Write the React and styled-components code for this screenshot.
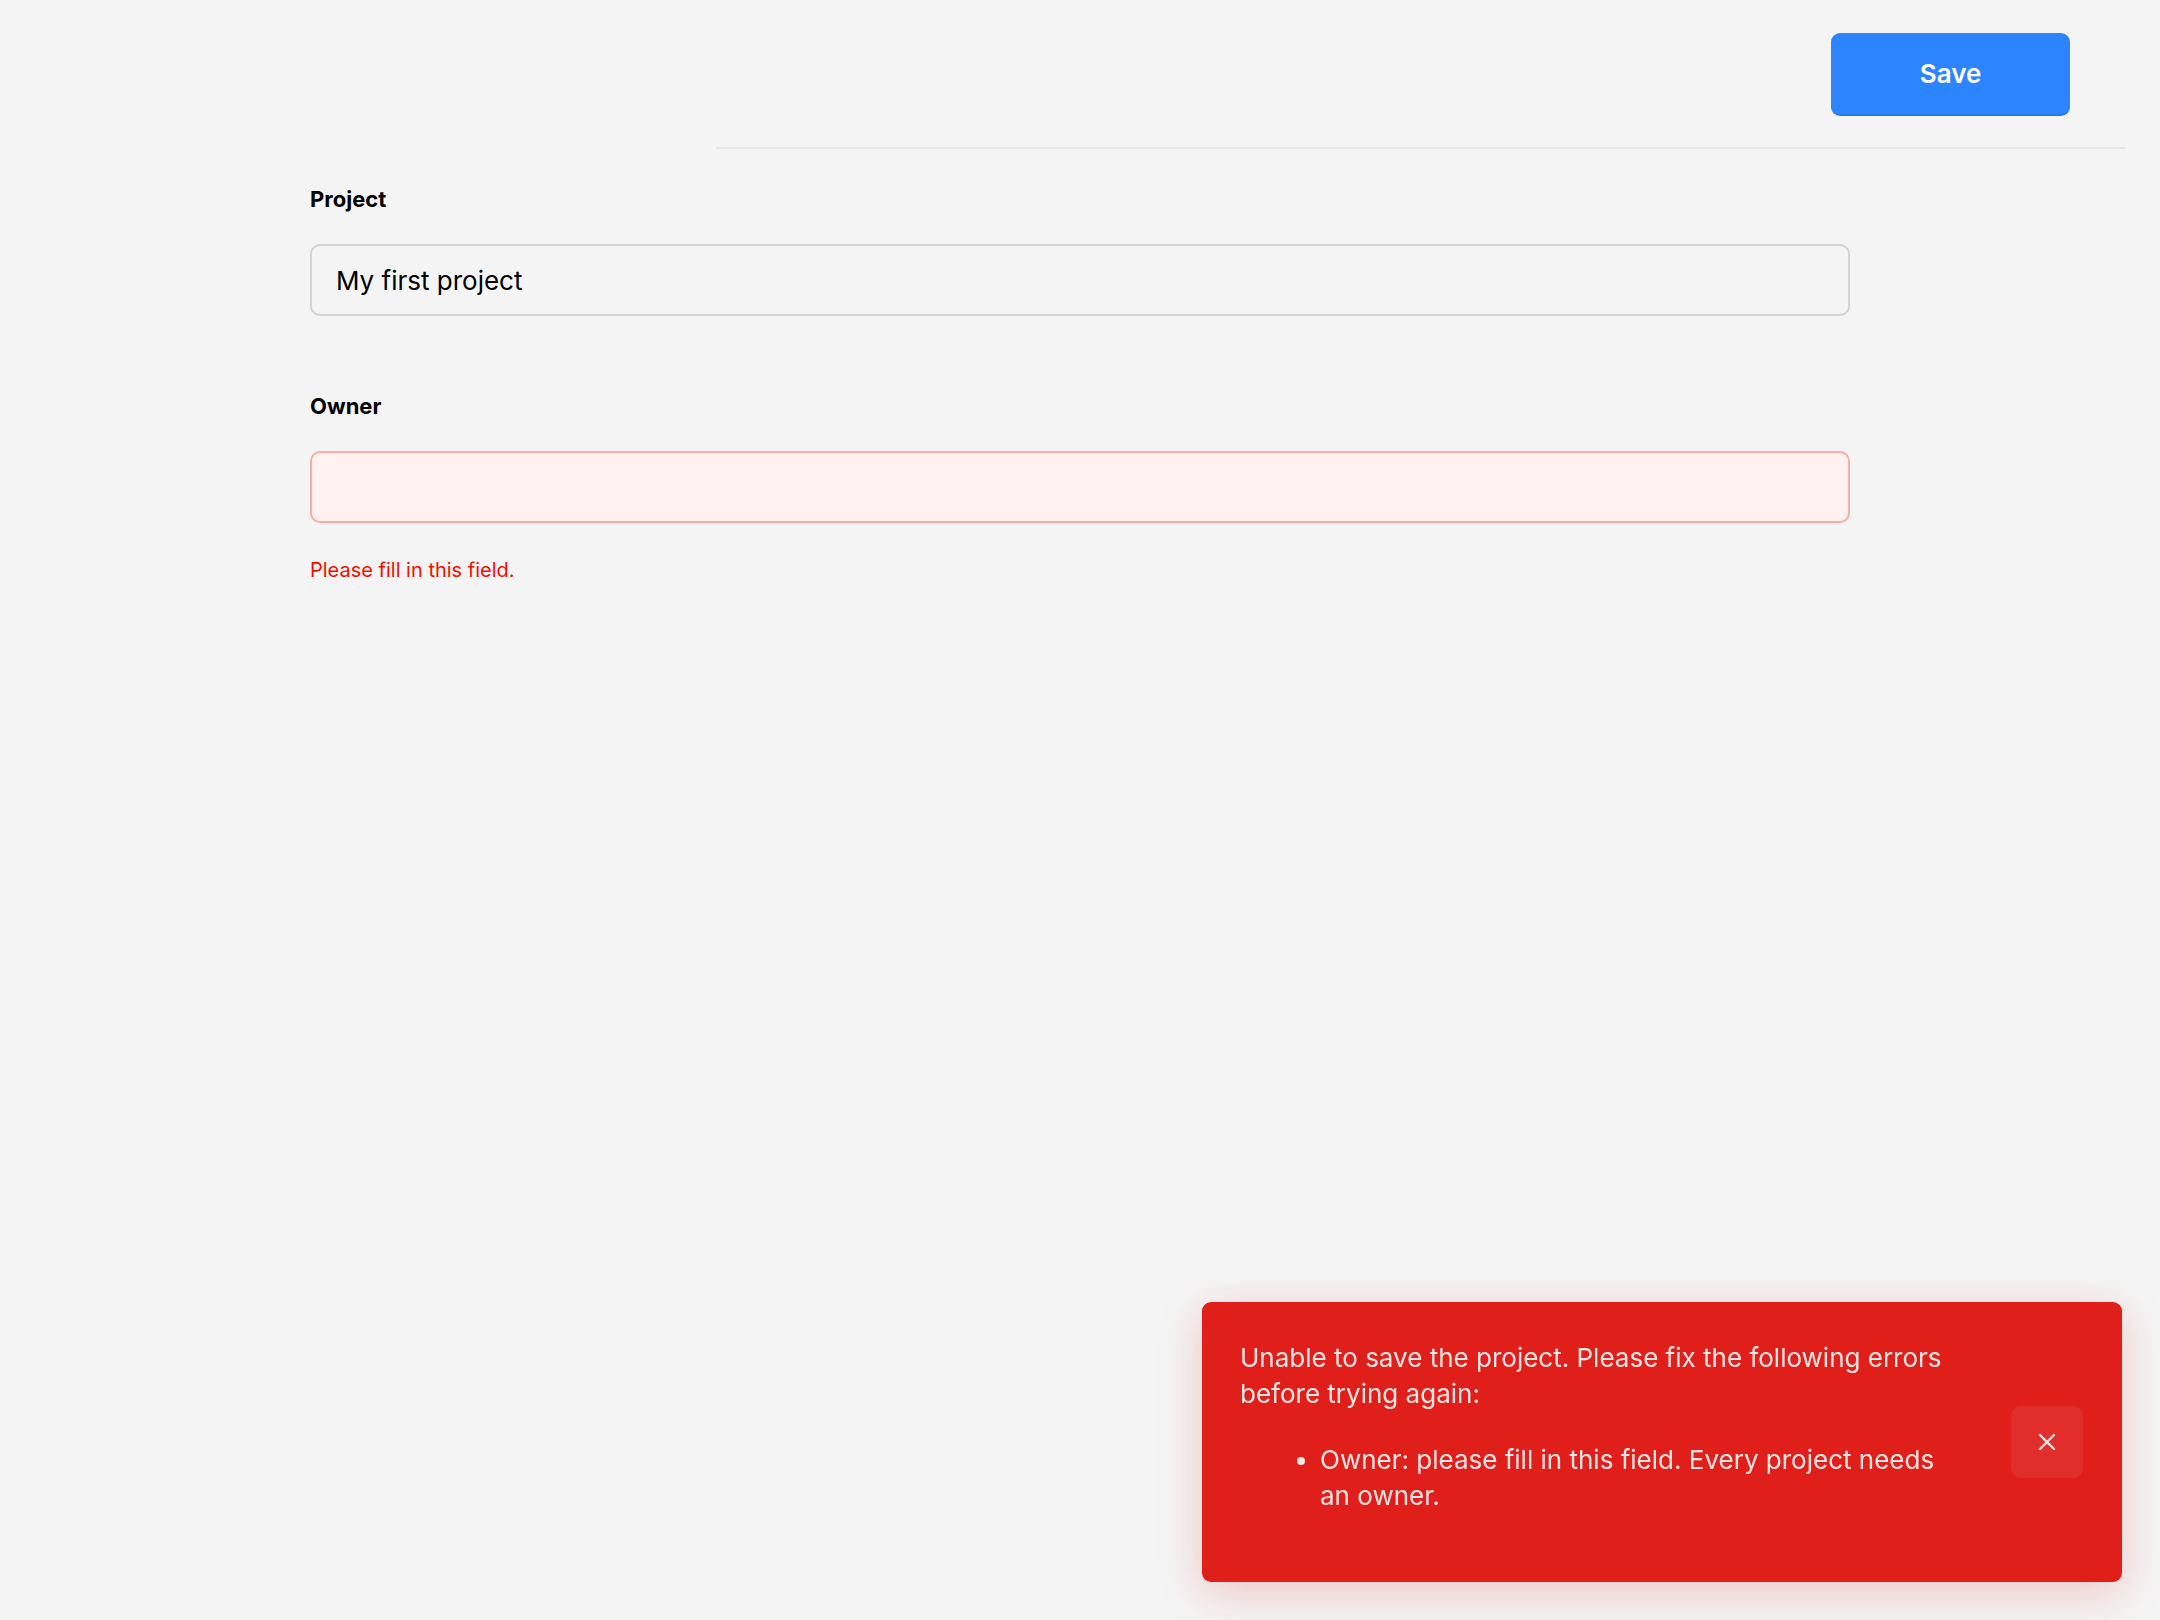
import React from 'react';
import styled, { createGlobalStyle } from 'styled-components';

const GlobalStyle = createGlobalStyle`
  * {
    box-sizing: border-box;
  }
  body {
    margin: 0;
    background: #f4f4f4;
    font-family: Inter, "Noto Sans", "Liberation Sans", sans-serif;
    color: #111;
  }
`;

const Header = styled.header`
  display: flex;
  justify-content: flex-end;
  width: 1410px;
  margin: 0 34px 0 auto;
  padding: 33px 56px 31px 0;
  border-bottom: 2px solid #e6e6e6;
`;

const SaveButton = styled.button`
  width: 239px;
  height: 83px;
  border: none;
  border-bottom: 2px solid #2a7be9;
  border-radius: 9px;
  background: #2d84ff;
  color: #fff;
  font-family: inherit;
  font-size: 26px;
  font-weight: 600;
  cursor: pointer;
`;

const Form = styled.form`
  display: flex;
  flex-direction: column;
  gap: 77px;
  width: 1540px;
  margin: 37px auto 0;
`;

const Field = styled.div`
  display: flex;
  flex-direction: column;
`;

const Label = styled.label`
  font-size: 22px;
  line-height: 26px;
  font-weight: 700;
  color: #000;
  margin-bottom: 32px;
`;

const Input = styled.input`
  width: 100%;
  height: 72px;
  padding: 0 24px;
  border: 2px solid ${(p) => (p.$invalid ? '#fcaaa8' : '#d2d2d2')};
  border-radius: 10px;
  background: ${(p) => (p.$invalid ? '#fff1f0' : 'transparent')};
  font-family: inherit;
  font-size: 26px;
  color: #000;
  outline: none;
`;

const ErrorText = styled.div`
  margin-top: 35px;
  font-size: 20px;
  line-height: 24px;
  color: #f70c00;
`;

const Toast = styled.div`
  position: fixed;
  right: 38px;
  bottom: 38px;
  width: 920px;
  display: flex;
  align-items: center;
  gap: 30px;
  padding: 38px 39px 38px 38px;
  border-radius: 9px;
  background: #e01f1a;
  color: #ffe4e4;
  box-shadow: 0 10px 44px rgba(224, 31, 26, 0.22);
`;

const ToastBody = styled.div`
  flex: 1;
  font-size: 26px;
  line-height: 36px;

  p {
    margin: 0;
    max-width: 720px;
  }

  ul {
    margin: 30px 0;
    padding-left: 80px;
    max-width: 700px;
  }
`;

const CloseButton = styled.button`
  flex: none;
  display: flex;
  align-items: center;
  justify-content: center;
  width: 72px;
  height: 72px;
  border: none;
  border-radius: 10px;
  background: rgba(255, 255, 255, 0.07);
  color: #ffe4e4;
  cursor: pointer;
`;

const App = () => {
  return (
    <>
      <GlobalStyle />
      <Header>
        <SaveButton type="button">Save</SaveButton>
      </Header>

      <Form>
        <Field>
          <Label htmlFor="project">Project</Label>
          <Input id="project" defaultValue="My first project" />
        </Field>
        <Field>
          <Label htmlFor="owner">Owner</Label>
          <Input id="owner" $invalid />
          <ErrorText>Please fill in this field.</ErrorText>
        </Field>
      </Form>

      <Toast role="alert">
        <ToastBody>
          <p>Unable to save the project. Please fix the following errors before trying again:</p>
          <ul>
            <li>Owner: please fill in this field. Every project needs an owner.</li>
          </ul>
        </ToastBody>
        <CloseButton type="button" aria-label="Close">
          <svg width="18" height="18" viewBox="0 0 18 18" fill="none">
            <path d="M2 2 16 16M16 2 2 16" stroke="currentColor" strokeWidth="2.4" strokeLinecap="round" />
          </svg>
        </CloseButton>
      </Toast>
    </>
  );
};

export default App;
